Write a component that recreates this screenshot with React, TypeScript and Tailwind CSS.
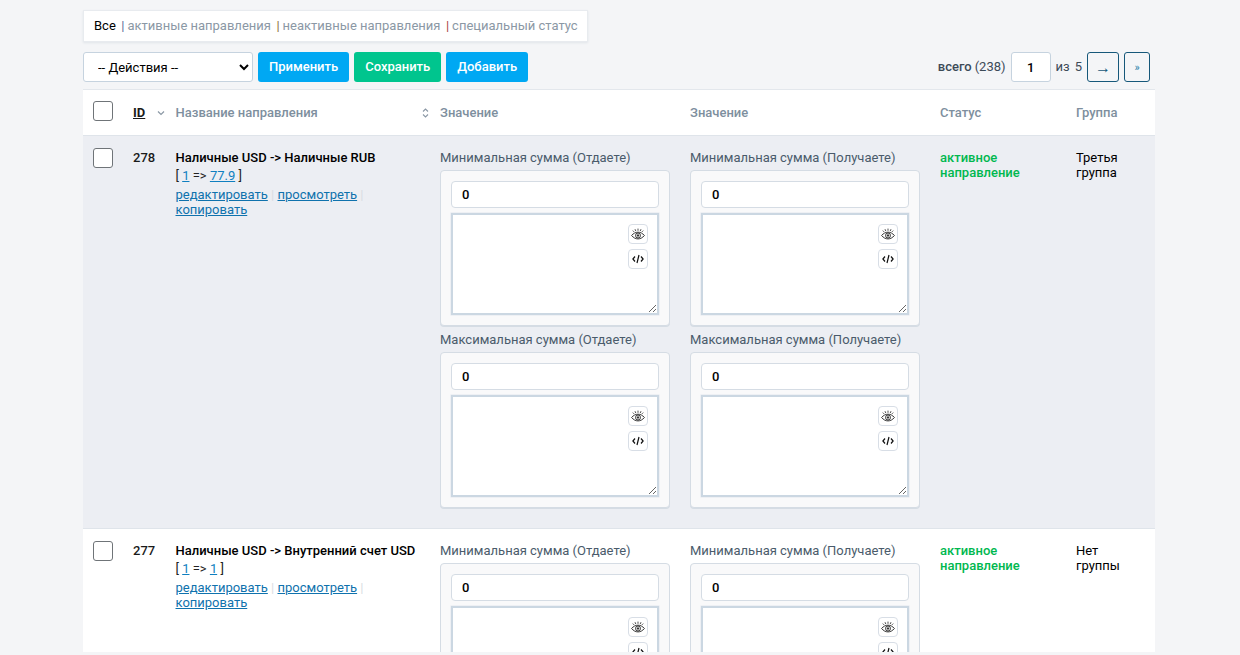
import type { ReactNode } from "react";

const font = { fontFamily: "Roboto, 'Noto Sans', sans-serif" };

function EyeIcon() {
  return (
    <svg width="14" height="12" viewBox="0 0 14 12" fill="none" stroke="#222" strokeWidth=".9">
      <path d="M.6 7.500C2.500 5.200 4.600 4.200 7 4.200s4.500 1 6.400 3.300C11.500 9.800 9.400 10.900 7 10.900S2.500 9.800.6 7.500z" />
      <circle cx="7" cy="7.500" r="2.500" />
      <circle cx="7" cy="7.500" r=".8" fill="#222" />
      <path d="M7 .6v2.200M4 1.200l.8 1.800M10 1.200l-.8 1.800M1.800 2.600l1.300 1.300M12.200 2.600l-1.300 1.300" strokeWidth=".8" />
    </svg>
  );
}

function CodeIcon() {
  return (
    <svg width="12" height="10" viewBox="0 0 12 10" fill="none" stroke="#111" strokeWidth="1.200">
      <path d="M3 2.500.9 5 3 7.500M9 2.500 11.100 5 9 7.500M7 1 5 9" />
    </svg>
  );
}

function IconButton({ children }: { children: ReactNode }) {
  return (
    <button className="flex h-5 w-5 items-center justify-center rounded-[4px] border border-[#d8dee6] bg-white">
      {children}
    </button>
  );
}

function AmountField({ label, first }: { label: string; first?: boolean }) {
  return (
    <div className={first ? "" : "mt-[6px]"}>
      <div className="mb-[5px] whitespace-nowrap text-[13px] leading-[15px] text-[#4a5b6b]">{label}</div>
      <div className="h-[156px] w-[230px] rounded-[4px] border border-[#d5dce4] bg-[#f9f9fa] px-[10px] pt-[10px] shadow-[0_1px_0_#d5dce4]">
        <input
          readOnly
          value="0"
          className="block h-[27px] w-[208px] rounded-[4px] border border-[#d5dce4] bg-white px-[10px] text-[13px] font-medium text-black outline-none"
        />
        <div className="relative mt-[5px] h-[102px] w-[208px]">
          <textarea
            readOnly
            className="block h-[102px] w-[208px] resize rounded-none border-2 border-[#cbd7e2] bg-white shadow-[0_0_0_0.5px_#e3e8ee] outline-none"
          />
          <div className="absolute right-[11px] top-[11px] flex flex-col gap-[5px]">
            <IconButton>
              <EyeIcon />
            </IconButton>
            <IconButton>
              <CodeIcon />
            </IconButton>
          </div>
        </div>
      </div>
    </div>
  );
}

function ValueColumn({ side }: { side: string }) {
  return (
    <div>
      <AmountField first label={`Минимальная сумма (${side})`} />
      <AmountField label={`Максимальная сумма (${side})`} />
    </div>
  );
}

const columns = "grid grid-cols-[50px_42px_265px_250px_250px_136px_79px]";

function Checkbox() {
  return <div className="ml-[10px] h-5 w-5 rounded-[3px] border border-[#6f7478] bg-white" />;
}

type RowProps = {
  id: number;
  name: string;
  from: string;
  to: string;
  group: [string, string];
  tinted?: boolean;
};

function Row({ id, name, from, to, group, tinted }: RowProps) {
  return (
    <div className={`${columns} h-[393px] border-t border-[#dfe4ea] pt-[11px] ${tinted ? "bg-[#eceef3]" : "bg-white"}`}>
      <div className="pt-px">
        <Checkbox />
      </div>
      <div className="pt-[3px] text-[13px] font-medium leading-[15px] text-[#1a1a1a]">{id}</div>
      <div className="pl-[0.5px] pt-[3px] text-[13px] leading-[15px]">
        <div className="whitespace-nowrap font-medium text-black">{name}</div>
        <div className="mt-[3px] text-[#222]">
          [ <a className="text-[#0f7fc0] underline">{from}</a> =&gt; <a className="text-[#0f7fc0] underline">{to}</a> ]
        </div>
        <div className="mt-[4px] w-[200px] text-[#0f72ad]">
          <a className="underline">редактировать</a> <span className="text-[#d9dde2]">|</span>{" "}
          <a className="underline">просмотреть</a> <span className="text-[#d9dde2]">|</span>{" "}
          <a className="underline">копировать</a>
        </div>
      </div>
      <div className="pt-[3px]">
        <ValueColumn side="Отдаете" />
      </div>
      <div className="pt-[3px]">
        <ValueColumn side="Получаете" />
      </div>
      <div className="pt-[3px] text-[13px] font-medium leading-[15px] text-[#00b84f]">
        активное
        <br />
        направление
      </div>
      <div className="pt-[3px] text-[13px] leading-[15px] text-black">
        {group[0]}
        <br />
        {group[1]}
      </div>
    </div>
  );
}

function Head({ children }: { children: ReactNode }) {
  return <div className="text-[13px] font-medium text-[#7e8f9e]">{children}</div>;
}

function Action({ label, color }: { label: string; color: string }) {
  return (
    <button className={`h-[30px] rounded-[3px] px-[11px] text-[13px] font-medium text-white ${color}`}>{label}</button>
  );
}

export default function App() {
  return (
    <div className="h-[655px] overflow-hidden bg-[#f4f5f7] pb-[3px]" style={font}>
      <div className="h-full overflow-hidden pl-[83px] pr-[85px] pt-[10px]">
        <div className="flex h-[32px] w-[505px] items-center whitespace-nowrap border border-[#e8ebef] bg-white pl-[10px] text-[13px] text-[#8b98a5] shadow-[0_1px_2px_#e1e5ea]">
          <span className="text-black">Все</span>
          <span className="ml-[5.5px] mr-[3px] text-[#5a6a9a]">|</span>
          <span>активные направления</span>
          <span className="ml-[5.5px] mr-[3px] text-[#8a6d3b]">|</span>
          <span>неактивные направления</span>
          <span className="ml-[5.5px] mr-[3px] text-[#a94442]">|</span>
          <span>специальный статус</span>
        </div>

        <div className="mt-[10px] flex h-[30px] items-center">
          <select className="h-[30px] w-[170px] rounded-[3px] border border-[#c6d3df] bg-white pl-[10px] text-[13px] text-black outline-none">
            <option>-- Действия --</option>
          </select>
          <div className="ml-[5px] flex gap-[5px]">
            <Action label="Применить" color="bg-[#00a8f3]" />
            <Action label="Сохранить" color="bg-[#00c58e]" />
            <Action label="Добавить" color="bg-[#00a8f3]" />
          </div>
          <div className="ml-auto flex items-center text-[13px] text-[#3c4a57]">
            <span className="font-medium">всего</span>
            <span className="ml-[3px]">(238)</span>
            <input
              readOnly
              value="1"
              className="ml-[5px] h-[30px] w-[40px] rounded-[3px] border border-[#c6d3df] bg-white text-center text-[13px] font-medium text-black outline-none"
            />
            <span className="ml-[5px]">из</span>
            <span className="ml-[5px]">5</span>
            <button className="ml-[5px] h-[30px] w-[32px] rounded-[3px] border border-[#16587a] pt-[2px] text-[16px] leading-none text-[#16587a]">
              →
            </button>
            <button className="ml-[5px] mr-[5px] h-[30px] w-[26px] rounded-[3px] border border-[#16587a] pt-[2px] text-[11px] text-[#2b7fa8]">
              »
            </button>
          </div>
        </div>

        <div className={`${columns} mt-[7px] h-[46px] items-center border-t border-[#e3e7ec] bg-white`}>
          <div className="mb-[3px]">
            <Checkbox />
          </div>
          <div className="flex items-center">
            <span className="text-[13px] font-bold text-[#1a1a1a] underline">ID</span>
            <svg className="ml-[12px]" width="8" height="6" viewBox="0 0 8 6" fill="none" stroke="#8b98a5" strokeWidth="1.200">
              <path d="M1 1.500 4 4.500 7 1.500" />
            </svg>
          </div>
          <div className="flex items-center justify-between pl-[0.5px] pr-[11px]">
            <Head>Название направления</Head>
            <svg width="7" height="10" viewBox="0 0 7 10" fill="none" stroke="#8b98a5" strokeWidth="1.100">
              <path d="M1 3.500 3.500 1 6 3.500M1 6.500 3.500 9 6 6.500" />
            </svg>
          </div>
          <Head>Значение</Head>
          <Head>Значение</Head>
          <Head>Статус</Head>
          <Head>Группа</Head>
        </div>

        <Row tinted id={278} name="Наличные USD -> Наличные RUB" from="1" to="77.9" group={["Третья", "группа"]} />
        <Row id={277} name="Наличные USD -> Внутренний счет USD" from="1" to="1" group={["Нет", "группы"]} />
      </div>
    </div>
  );
}
